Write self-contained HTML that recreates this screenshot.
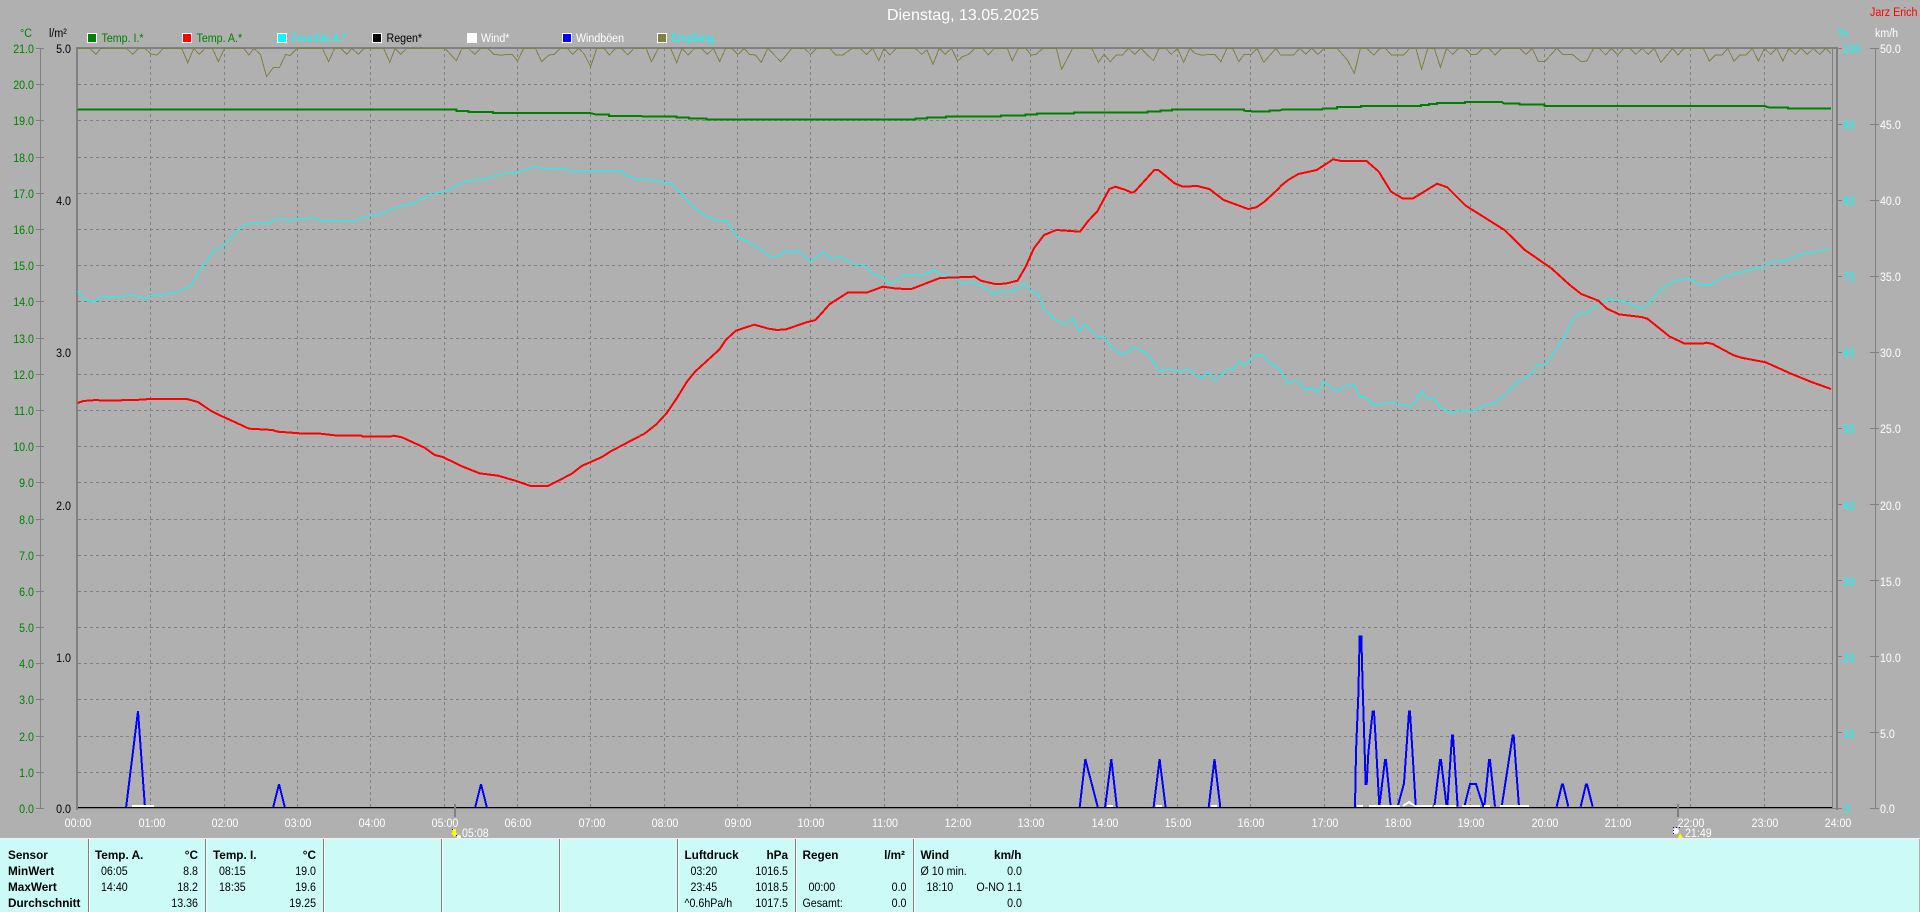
<!DOCTYPE html>
<html lang="de">
<head>
<meta charset="utf-8">
<title>Dienstag, 13.05.2025</title>
<style>
html,body{margin:0;padding:0;background:#b0b0b0;overflow:hidden}
svg{display:block}
text{font:12px "Liberation Sans",sans-serif;transform-box:fill-box;transform:scaleX(.89)}
.s{transform-origin:0 0}
.e{text-anchor:end;transform-origin:100% 0}
.m{text-anchor:middle;transform-origin:50% 0}
.b{font-weight:bold;transform:scaleX(.98)}
.ttl{font-size:16px;transform:none}
polyline,path{fill:none;vector-effect:non-scaling-stroke}
.c,.red polyline,.bl polyline{shape-rendering:crispEdges}
.red polyline{stroke:#f00;stroke-width:2}
.grn polyline{stroke:#008000;stroke-width:2}
.cy polyline{stroke:#0ff;stroke-width:1}
.ol polyline{stroke:#808040;stroke-width:1}
.bl polyline{stroke:#00f;stroke-width:2}
</style>
</head>
<body>
<svg xmlns="http://www.w3.org/2000/svg" width="1920" height="912" viewBox="0 0 1920 912">
<rect width="1920" height="912" fill="#b0b0b0"/>

<!-- grid -->
<path class="c" stroke="#808080" stroke-width="1" stroke-dasharray="3 3" d="M78 84.5H1836M78 120.5H1836M78 157.5H1836M78 193.5H1836M78 229.5H1836M78 265.5H1836M78 301.5H1836M78 338.5H1836M78 374.5H1836M78 410.5H1836M78 446.5H1836M78 482.5H1836M78 519.5H1836M78 555.5H1836M78 591.5H1836M78 627.5H1836M78 663.5H1836M78 699.5H1836M78 736.5H1836M78 772.5H1836"/>
<path class="c" stroke="#808080" stroke-width="1" stroke-dasharray="3 3" d="M150.5 48V808M224.5 48V808M297.5 48V808M370.5 48V808M444.5 48V808M517.5 48V808M590.5 48V808M664.5 48V808M737.5 48V808M810.5 48V808M884.5 48V808M957.5 48V808M1030.5 48V808M1104.5 48V808M1177.5 48V808M1250.5 48V808M1324.5 48V808M1397.5 48V808M1470.5 48V808M1544.5 48V808M1617.5 48V808M1690.5 48V808M1764.5 48V808"/>

<!-- axes -->
<path class="c" stroke="#808080" stroke-width="2" d="M76 48H1838M77 47V810M1837 47V810"/>
<path class="c" stroke="#808080" stroke-width="1" d="M76 808.5H1838"/>
<path class="c" stroke="#808080" stroke-width="1" d="M1832.5 48V808"/>
<path class="c" stroke="#808080" stroke-width="1" d="M40.5 48V808M36 48.5H44M36 84.5H44M36 120.5H44M36 157.5H44M36 193.5H44M36 229.5H44M36 265.5H44M36 301.5H44M36 338.5H44M36 374.5H44M36 410.5H44M36 446.5H44M36 482.5H44M36 519.5H44M36 555.5H44M36 591.5H44M36 627.5H44M36 663.5H44M36 699.5H44M36 736.5H44M36 772.5H44M36 808.5H44"/>
<path class="c" stroke="#808080" stroke-width="1" d="M1838 48.5H1842M1838 124.5H1842M1838 200.5H1842M1838 276.5H1842M1838 352.5H1842M1838 428.5H1842M1838 504.5H1842M1838 580.5H1842M1838 656.5H1842M1838 732.5H1842M1838 808.5H1842"/>
<path class="c" stroke="#808080" stroke-width="1" d="M1875.5 48V808"/>
<path class="c" stroke="#808080" stroke-width="1" d="M1870 48.5H1879M1870 124.5H1879M1870 200.5H1879M1870 276.5H1879M1870 352.5H1879M1870 428.5H1879M1870 504.5H1879M1870 580.5H1879M1870 656.5H1879M1870 732.5H1879M1870 808.5H1879"/>

<!-- olive -->
<g class="ol c">
<g transform="scale(.40816,.33333)"><polyline points="190,145 220,145 235,163 247,145 310,145 325,163 340,145 355,145 370,162 385,165 400,145 445,145 460,188 475,145 488,163 502,145 520,145 535,185 550,145 597,145 610,165 622,145 638,163 653,230 670,202 685,202 700,163 710,167 728,145 790,145 805,185 820,145 835,145 850,163 862,145 878,163 892,145 940,145 955,187 968,145 982,163 997,145 1090,145 1118,182 1132,145 1148,145 1163,163 1178,145 1195,145 1210,163 1225,165 1255,163 1268,183 1283,145 1312,145 1327,185 1345,165 1358,163 1373,145 1390,145 1403,163 1418,145 1432,163 1447,200 1462,145 1480,145 1493,165 1508,145 1522,145 1538,165 1553,145 1568,145"/></g>
<g transform="translate(640,0) scale(.40816,.33333)"><polyline points="0,145 15,145 28,185 45,145 75,145 90,188 103,145 118,165 133,145 150,145 165,163 180,145 195,185 210,145 225,145 240,163 255,145 268,163 283,165 297,187 313,145 345,185 372,145 403,145 418,163 433,145 465,145 480,165 497,165 520,145 540,145 555,163 570,145 585,182 598,145 612,165 628,145 675,145 690,163 703,150 718,193 733,145 748,163 763,145 778,183 790,170 805,163 820,145 840,145 853,165 868,145 900,145 912,182 927,145 945,145 958,165 970,163 988,145 1020,145 1033,208 1060,145 1107,145 1123,187 1137,163 1152,185 1167,165 1182,165 1197,145 1212,163 1227,145 1258,182 1272,145 1288,145 1302,163 1317,145 1332,187 1347,145 1360,160 1375,165 1408,163 1423,185 1438,145 1452,145 1467,185 1480,163 1497,163 1512,145 1528,187 1558,145 1568,163"/></g>
<g transform="translate(1280,0) scale(.40816,.33333)"><polyline points="0,165 33,165 48,145 63,163 78,145 93,163 108,145 140,145 165,180 182,220 197,145 212,145 230,165 245,145 258,145 273,165 303,165 318,145 333,145 347,208 362,145 378,145 393,202 408,145 423,163 438,145 452,145 468,163 482,163 497,145 512,145 527,165 543,145 587,145 603,163 618,145 633,185 648,185 678,145 693,163 716,163 738,185 752,183 768,145 782,145 798,165 812,145 828,165 842,145 857,145 872,163 887,145 902,163 917,145 933,187 962,145 975,165 990,145 1037,145 1052,183 1067,165 1083,165 1097,145 1112,183 1127,165 1142,165 1157,145 1172,183 1187,145 1202,163 1217,145 1232,183 1247,145 1262,163 1277,145 1292,163 1307,145 1322,163 1337,145 1350,160"/></g>
</g>

<!-- cyan -->
<g class="cy c">
<g transform="scale(.40816,.33333)">
<polyline transform="translate(0,840)" points="190,33 205,57 232,67 248,48 275,52 300,52 310,46 330,46 355,57 370,46 405,43 430,40 470,15"/>
<polyline points="470,855 490,810 525,752 550,735 592,680 620,667 660,670 670,660 695,656 710,662 725,656 755,656 770,653 785,661 810,661 840,665 870,665 890,650 925,645 945,636 970,622 1010,611 1060,583 1090,574 1145,542 1190,538 1210,528 1240,519 1270,517 1305,502 1390,509 1405,516 1420,511 1520,511 1540,530 1568,540"/>
</g>
<g transform="translate(640,0) scale(.40816,.33333)">
<polyline points="0,539 20,539 60,548 75,548 100,580 135,625 165,650 195,665 210,660 240,712 265,725 320,770 340,768 362,750 372,758 387,750 418,785 450,755 465,775 495,772 525,793 548,793 570,822 600,835 612,852 650,823 680,823 695,825 720,810 745,826 770,830 790,852 810,845 840,860 868,884 885,872 900,878 925,868 940,850 955,870 970,880 975,880 990,928 1015,958 1045,974 1060,955 1078,995 1090,973 1125,1015 1135,1008 1155,1042 1182,1066 1210,1042 1245,1062 1272,1113 1300,1108 1320,1114 1345,1108 1360,1125 1375,1135 1392,1116 1408,1142 1440,1108 1450,1112 1468,1085 1480,1096 1510,1065 1525,1065 1540,1085 1568,1108"/>
</g>
<g transform="translate(1280,0) scale(.40816,.33333)">
<polyline points="0,1108 20,1150 45,1140 62,1172 78,1164 92,1177 108,1146 138,1173 165,1156 182,1156 195,1191 212,1194 230,1216 270,1208 320,1220 332,1208 347,1172 362,1198 378,1194 393,1223 422,1240 440,1230 480,1234 497,1218 525,1210 545,1190 590,1137 615,1124 630,1097 650,1092 680,1045 720,955 738,937 755,937 785,907 810,896 850,908 885,925 905,910 930,872 965,842 1005,835 1025,852 1050,857 1090,828 1120,820 1150,810 1190,797 1210,785 1230,785 1275,762 1300,760 1320,752 1350,747"/>
</g>
</g>

<!-- green -->
<g class="grn c">
<g transform="scale(.40816,.33333)"><polyline points="190,329 1118,329 1118,333 1148,333 1148,336 1208,336 1208,339 1445,339 1462,344 1492,344 1492,348 1568,348"/></g>
<g transform="translate(640,0) scale(.40816,.33333)"><polyline points="0,348 12,350 90,350 90,353 120,353 120,356 163,356 163,359 675,359 675,356 703,356 703,353 750,353 750,350 885,350 885,347 945,347 945,344 973,344 973,341 1063,341 1063,338 1243,338 1243,335 1275,335 1275,332 1303,332 1303,329 1480,329 1480,332 1510,335 1542,335 1542,332 1568,332"/></g>
<g transform="translate(1280,0) scale(.40816,.33333)"><polyline points="0,332 5,329 103,329 105,325 140,325 140,321 198,321 198,318 345,318 345,315 365,315 365,312 385,312 385,309 453,309 453,306 543,306 550,311 587,311 587,314 648,314 648,318 1187,318 1200,323 1245,323 1245,326 1350,326"/></g>
</g>

<!-- red -->
<g class="red">
<g transform="translate(0,280) scale(.40816,.33333)"><polyline points="190,369 205,363 235,360 255,362 295,362 300,360 355,359 360,357 458,357 485,366 515,391 535,404 575,426 610,446 668,450 680,455 735,460 785,461 820,466 885,467 890,470 955,470 965,467 985,472 1040,503 1065,525 1085,531 1130,558 1175,580 1220,587 1265,603 1300,618 1342,618 1400,582 1425,558 1475,531 1495,515 1535,489 1568,468"/></g>
<g transform="translate(640,270) scale(.40816,.33333)"><polyline points="0,497 10,492 40,463 65,430 90,385 115,335 135,305 195,238 210,210 235,182 280,164 315,176 335,180 358,178 405,158 430,150 465,102 510,67 555,68 595,50 630,56 665,57 735,24 820,20 835,32 870,42 895,41 925,32 945,-10 965,-65 990,-105 1020,-120 1078,-115 1100,-150 1120,-175 1150,-243 1165,-250 1190,-240 1205,-232 1212,-235 1260,-300 1270,-300 1310,-260 1330,-250 1365,-252 1395,-243 1430,-210 1490,-183 1510,-188 1530,-205 1568,-248"/></g>
<g transform="translate(1280,0) scale(.40816,.33333)"><polyline points="0,560 20,540 45,522 90,510 130,478 150,483 212,483 242,515 272,575 300,595 325,596 385,551 410,562 455,617 550,690 600,750 665,805 710,855 738,882 780,902 800,925 830,943 885,951 900,956 955,1010 990,1030 1035,1031 1045,1028 1060,1032 1110,1065 1130,1073 1190,1087 1250,1120 1300,1145 1350,1167"/></g>
</g>

<!-- blue -->
<g class="bl">
<polyline points="126,808 138,711 145,808"/>
<polyline points="273,808 279,784 285,808"/>
<polyline points="475,808 481,784 487,808"/>
<polyline points="1079.6,808 1085.3,759 1098,808"/>
<polyline points="1105,808 1111.3,759 1117,808"/>
<polyline points="1153.5,808 1159.6,759 1165.7,808"/>
<polyline points="1208.6,808 1214.5,759 1220.4,808"/>
<g transform="translate(1300,620) scale(.33333)">
<polyline points="165,562 168,395 175,225 179,50 184,50 188,200 197,492 200,492 205,400 213,320 218,275 222,275 228,375 238,560 255,420 258,420 272,560"/>
<polyline points="293,560 312,490 327,275 330,275 345,520 347,560"/>
<polyline points="403,560 420,420 423,420 440,560 442,560 456,347 459,347 473,560"/>
<polyline points="493,560 510,492 528,492 550,560 553,560 567,420 570,420 585,560"/>
<polyline points="605,560 638,347 641,347 657,560"/>
<polyline points="770,560 786,493 789,493 805,560"/>
<polyline points="842,560 858,493 861,493 878,560"/>
</g>
</g>

<!-- white wind -->
<g stroke="#fff" stroke-width="2" class="c">
<path d="M132 806H154M1107 806H1113M1156 806H1162M1211 806H1217M1357 806H1363M1369 806H1400"/>
<path d="M1403 806L1409 802L1415 806H1432M1434 806H1456M1462 806H1480M1484 806H1490M1500 806H1529"/>
</g>

<!-- baseline -->
<path class="c" stroke="#000" stroke-width="1" d="M78 807.5H1832"/>

<!-- marker ticks -->
<path class="c" stroke="#808080" stroke-width="2" d="M455 804V817M1678 804V817"/>

<!-- marker icons -->
<polygon points="452,829 456,829 456,833 458,833 454.5,837 451,833 452.5,833" fill="#ff0"/>
<rect x="452" y="829" width="1" height="1" fill="#000080"/>
<rect x="456" y="835" width="1" height="1" fill="#000080"/>
<circle cx="459" cy="837" r="2" fill="#fff"/>
<circle cx="1676" cy="831" r="3" fill="#fff"/>
<path class="c" stroke="#000080" stroke-width="1" stroke-dasharray="1 2" d="M1673 827.5H1680M1673.5 827V834"/>
<polygon points="1680,833 1683,838 1681.5,838 1681.5,839 1679,839 1679,838 1678,838" fill="#ff0"/>

<!-- title -->
<text class="m ttl" x="963" y="20" fill="#fff">Dienstag, 13.05.2025</text>
<text class="s" x="1870" y="16" fill="#f00">Jarz Erich</text>

<!-- unit labels -->
<text class="s" x="20" y="37" fill="#008000">°C</text>
<text class="s" x="49" y="37" fill="#000">l/m²</text>
<text class="s" x="1838" y="37" fill="#0ff">%</text>
<text class="s" x="1875" y="37" fill="#fff">km/h</text>

<!-- legend -->
<g stroke="#fff" stroke-width="1" class="c">
<rect x="87.5" y="33.5" width="9" height="9" fill="#008000"/>
<rect x="182.5" y="33.5" width="9" height="9" fill="#f00"/>
<rect x="277.5" y="33.5" width="9" height="9" fill="#0ff"/>
<rect x="372.5" y="33.5" width="9" height="9" fill="#000"/>
<rect x="467.5" y="33.5" width="9" height="9" fill="#fff"/>
<rect x="562.5" y="33.5" width="9" height="9" fill="#00f"/>
<rect x="657.5" y="33.5" width="9" height="9" fill="#808040"/>
</g>
<text class="s" x="101.5" y="42" fill="#008000">Temp. I.*</text>
<text class="s" x="196.5" y="42" fill="#008000">Temp. A.*</text>
<text class="s" x="291.5" y="42" fill="#0ff">Feuchte A.*</text>
<text class="s" x="386.5" y="42" fill="#000">Regen*</text>
<text class="s" x="481" y="42" fill="#fff">Wind*</text>
<text class="s" x="576" y="42" fill="#fff">Windböen</text>
<text class="s" x="671" y="42" fill="#0ff">Empfang</text>

<!-- temp axis -->
<g fill="#008000">
<text class="e" x="34" y="53">21.0</text><text class="e" x="34" y="89">20.0</text><text class="e" x="34" y="125">19.0</text><text class="e" x="34" y="162">18.0</text><text class="e" x="34" y="198">17.0</text><text class="e" x="34" y="234">16.0</text><text class="e" x="34" y="270">15.0</text><text class="e" x="34" y="306">14.0</text><text class="e" x="34" y="343">13.0</text><text class="e" x="34" y="379">12.0</text><text class="e" x="34" y="415">11.0</text><text class="e" x="34" y="451">10.0</text><text class="e" x="34" y="487">9.0</text><text class="e" x="34" y="524">8.0</text><text class="e" x="34" y="560">7.0</text><text class="e" x="34" y="596">6.0</text><text class="e" x="34" y="632">5.0</text><text class="e" x="34" y="668">4.0</text><text class="e" x="34" y="704">3.0</text><text class="e" x="34" y="741">2.0</text><text class="e" x="34" y="777">1.0</text><text class="e" x="34" y="813">0.0</text>
</g>

<!-- rain axis -->
<g fill="#000">
<text class="e" x="71" y="53">5.0</text><text class="e" x="71" y="205">4.0</text><text class="e" x="71" y="357">3.0</text><text class="e" x="71" y="510">2.0</text><text class="e" x="71" y="662">1.0</text><text class="e" x="71" y="813">0.0</text>
</g>

<!-- humidity axis -->
<g fill="#0ff">
<text class="s" x="1843" y="53">100</text><text class="s" x="1843" y="129">90</text><text class="s" x="1843" y="205">80</text><text class="s" x="1843" y="281">70</text><text class="s" x="1843" y="357">60</text><text class="s" x="1843" y="433">50</text><text class="s" x="1843" y="510">40</text><text class="s" x="1843" y="586">30</text><text class="s" x="1843" y="662">20</text><text class="s" x="1843" y="738">10</text><text class="s" x="1844" y="813">0</text>
</g>

<!-- wind axis -->
<g fill="#fff">
<text class="s" x="1880" y="53">50.0</text><text class="s" x="1880" y="129">45.0</text><text class="s" x="1880" y="205">40.0</text><text class="s" x="1880" y="281">35.0</text><text class="s" x="1880" y="357">30.0</text><text class="s" x="1880" y="433">25.0</text><text class="s" x="1880" y="510">20.0</text><text class="s" x="1880" y="586">15.0</text><text class="s" x="1880" y="662">10.0</text><text class="s" x="1880" y="738">5.0</text><text class="s" x="1880" y="813">0.0</text>
</g>

<!-- time labels -->
<g fill="#fff">
<text class="m" x="78" y="827">00:00</text><text class="m" x="152" y="827">01:00</text><text class="m" x="225" y="827">02:00</text><text class="m" x="298" y="827">03:00</text><text class="m" x="372" y="827">04:00</text><text class="m" x="445" y="827">05:00</text><text class="m" x="518" y="827">06:00</text><text class="m" x="592" y="827">07:00</text><text class="m" x="665" y="827">08:00</text><text class="m" x="738" y="827">09:00</text><text class="m" x="811" y="827">10:00</text><text class="m" x="885" y="827">11:00</text><text class="m" x="958" y="827">12:00</text><text class="m" x="1031" y="827">13:00</text><text class="m" x="1105" y="827">14:00</text><text class="m" x="1178" y="827">15:00</text><text class="m" x="1251" y="827">16:00</text><text class="m" x="1325" y="827">17:00</text><text class="m" x="1398" y="827">18:00</text><text class="m" x="1471" y="827">19:00</text><text class="m" x="1545" y="827">20:00</text><text class="m" x="1618" y="827">21:00</text><text class="m" x="1691" y="827">22:00</text><text class="m" x="1765" y="827">23:00</text><text class="m" x="1838" y="827">24:00</text>
<text class="s" x="462" y="837">05:08</text>
<text class="s" x="1685" y="837">21:49</text>
</g>

<!-- info panel -->
<rect x="0" y="838" width="1920" height="1" fill="#f0f0f0"/>
<rect x="0" y="839" width="1919" height="73" fill="#ccfbf7"/>
<path class="c" stroke="#808080" stroke-width="1" d="M88.5 839V912M205.5 839V912M323.5 839V912M441.5 839V912M559.5 839V912M677.5 839V912M795.5 839V912M913.5 839V912"/>
<path class="c" stroke="#fff" stroke-width="1" d="M89.5 839V912M206.5 839V912M324.5 839V912M442.5 839V912M560.5 839V912M678.5 839V912M796.5 839V912M914.5 839V912"/>

<g fill="#000">
<text class="s b" x="8" y="859">Sensor</text>
<text class="s b" x="8" y="875">MinWert</text>
<text class="s b" x="8" y="891">MaxWert</text>
<text class="s b" x="8" y="907">Durchschnitt</text>

<text class="s b" x="95" y="859">Temp. A.</text>
<text class="e b" x="198" y="859">°C</text>
<text class="s" x="101" y="875">06:05</text><text class="e" x="198" y="875">8.8</text>
<text class="s" x="101" y="891">14:40</text><text class="e" x="198" y="891">18.2</text>
<text class="e" x="198" y="907">13.36</text>

<text class="s b" x="213" y="859">Temp. I.</text>
<text class="e b" x="316" y="859">°C</text>
<text class="s" x="219" y="875">08:15</text><text class="e" x="316" y="875">19.0</text>
<text class="s" x="219" y="891">18:35</text><text class="e" x="316" y="891">19.6</text>
<text class="e" x="316" y="907">19.25</text>

<text class="s b" x="684.5" y="859">Luftdruck</text>
<text class="e b" x="788" y="859">hPa</text>
<text class="s" x="690.5" y="875">03:20</text><text class="e" x="788" y="875">1016.5</text>
<text class="s" x="690.5" y="891">23:45</text><text class="e" x="788" y="891">1018.5</text>
<text class="s" x="684.5" y="907">^0.6hPa/h</text><text class="e" x="788" y="907">1017.5</text>

<text class="s b" x="802.5" y="859">Regen</text>
<text class="e b" x="905" y="859">l/m²</text>
<text class="s" x="808.5" y="891">00:00</text><text class="e" x="906.5" y="891">0.0</text>
<text class="s" x="802.5" y="907">Gesamt:</text><text class="e" x="906.5" y="907">0.0</text>

<text class="s b" x="920.5" y="859">Wind</text>
<text class="e b" x="1021.5" y="859">km/h</text>
<text class="s" x="920.5" y="875">Ø 10 min.</text><text class="e" x="1022" y="875">0.0</text>
<text class="s" x="926.5" y="891">18:10</text><text class="e" x="1022" y="891">O-NO 1.1</text>
<text class="e" x="1022" y="907">0.0</text>
</g>
</svg>
</body>
</html>
